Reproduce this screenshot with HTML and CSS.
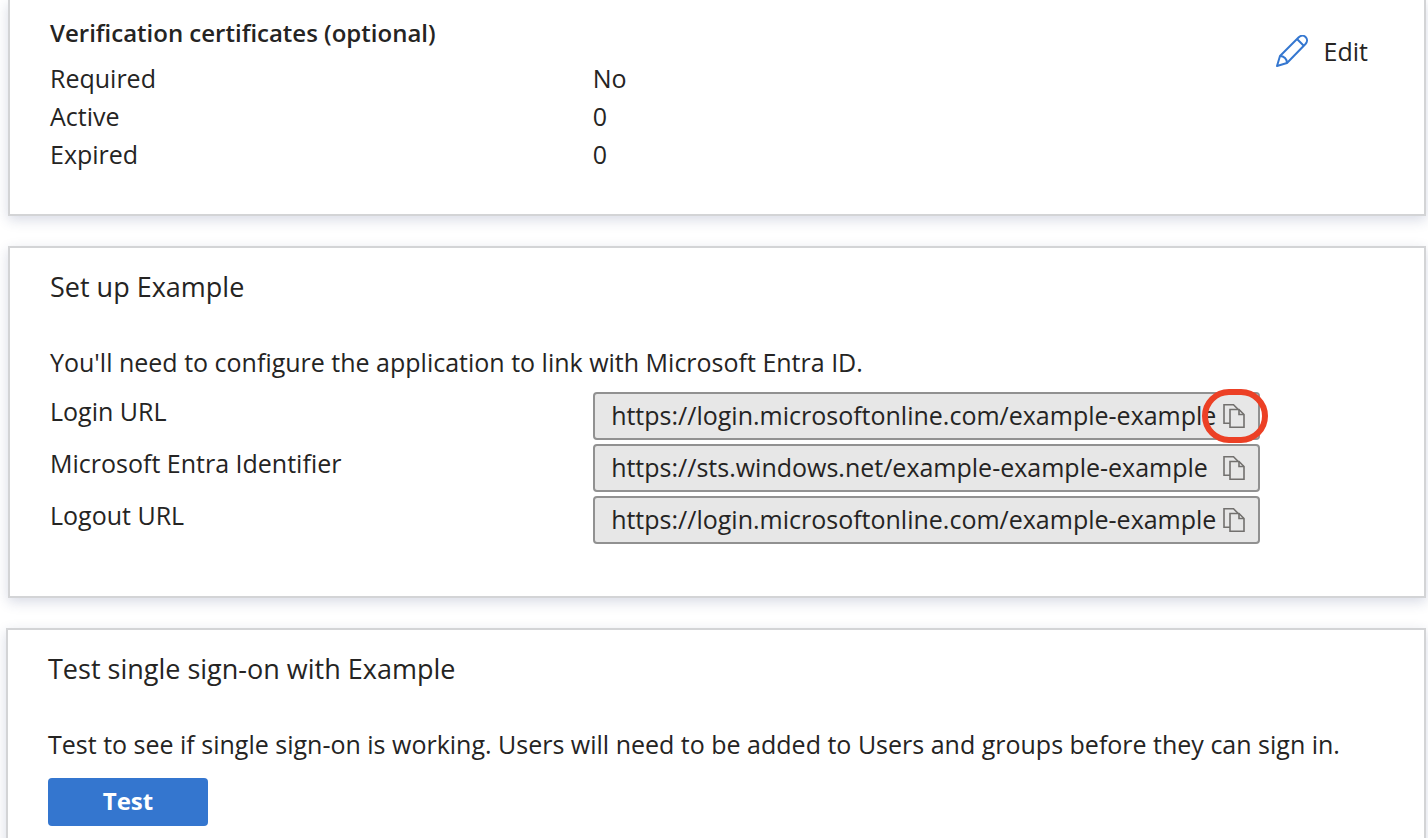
FILE: index.html
```html
<!DOCTYPE html>
<html lang="en">
<head>
  <meta charset="UTF-8" />
  <meta name="viewport" content="width=device-width, initial-scale=1.0" />
  <title>Single sign-on</title>
  <link rel="stylesheet" href="styles.css">
</head>
<body>
  <svg class="sprite" aria-hidden="true">
    <symbol id="copy" viewBox="0 0 22 24">
      <path d="M7 19.3H1V.8h9.500l4.500 4.500" />
      <path d="M7 5.500h9l5 5v12.700H7z" />
      <path d="M16 5.500v5h5" />
    </symbol>
  </svg>

  <section class="card card-certs">
    <div class="certs-main">
      <h2 class="certs-title">Verification certificates (optional)</h2>
      <dl class="certs-list">
        <dt>Required</dt>
        <dd>No</dd>
        <dt>Active</dt>
        <dd>0</dd>
        <dt>Expired</dt>
        <dd>0</dd>
      </dl>
    </div>
    <button class="edit" type="button">
      <svg class="edit-icon" viewBox="0 0 32 32" aria-hidden="true">
        <path d="M1 31l3-10L22.500 2.500c5-5 11.500 1.500 7 6.500L11 28z" />
        <path d="M21 4l7 7M4 21c4 0 7 3 7 7" />
      </svg>
      Edit
    </button>
  </section>

  <section class="card">
    <h2 class="card-title">Set up Example</h2>
    <p class="card-text">You'll need to configure the application to link with Microsoft Entra ID.</p>
    <div class="urls">
      <label for="login">Login URL</label>
      <div class="field">
        <input id="login" type="text" value="https://login.microsoftonline.com/example-example" readonly>
        <button class="copy marked" type="button" aria-label="Copy login URL"><svg><use href="#copy" /></svg></button>
      </div>
      <label for="identifier">Microsoft Entra Identifier</label>
      <div class="field">
        <input id="identifier" type="text" value="https://sts.windows.net/example-example-example" readonly>
        <button class="copy" type="button" aria-label="Copy identifier"><svg><use href="#copy" /></svg></button>
      </div>
      <label for="logout">Logout URL</label>
      <div class="field">
        <input id="logout" type="text" value="https://login.microsoftonline.com/example-example" readonly>
        <button class="copy" type="button" aria-label="Copy logout URL"><svg><use href="#copy" /></svg></button>
      </div>
    </div>
  </section>

  <section class="card card-test">
    <h2 class="card-title">Test single sign-on with Example</h2>
    <p class="card-text">Test to see if single sign-on is working. Users will need to be added to Users and groups before they can sign in.</p>
    <button class="primary" type="button">Test</button>
  </section>
</body>
</html>
```

FILE: styles.css
```css
* {
  box-sizing: border-box;
}
body {
  margin: 0;
  padding: 0 2px 0 8px;
  background: #fff;
  color: #252423;
  font-family: "Open Sans", "Noto Sans", sans-serif;
  font-size: 25px;
  line-height: 38px;
  overflow-x: hidden;
}
h2, p, dl, dd {
  margin: 0;
}
button, input {
  font: inherit;
  color: inherit;
}
button {
  padding: 0;
  border: 0;
  background: none;
  cursor: pointer;
}
.sprite {
  display: none;
}
.card {
  margin-bottom: 30px;
  padding: 20px 40px 52px;
  border: 2px solid #d3d4d6;
  background: #fff;
  box-shadow: 0 4px 12px rgba(40, 55, 110, 0.18);
}
.card-title {
  margin-bottom: 37px;
  font-size: 27px;
  font-weight: 400;
}

/* certificates */
.card-certs {
  display: flex;
  align-items: flex-start;
  padding: 14px 56px 41px 40px;
  border-top: 0;
}
.certs-main {
  flex: 1;
}
.certs-title {
  margin-bottom: 7px;
  font-size: 24px;
  font-weight: 600;
}
.certs-list {
  display: grid;
  grid-template-columns: 31fr 39fr;
}
.edit {
  display: flex;
  align-items: center;
  gap: 16px;
  margin-top: 18px;
}
.edit-icon {
  width: 32px;
  height: 32px;
  fill: none;
  stroke: #3577d0;
  stroke-width: 2;
  stroke-linejoin: round;
}

/* url fields */
.urls {
  display: grid;
  grid-template-columns: 57fr 70fr 13fr;
  row-gap: 4px;
  margin-top: 11px;
}
.urls label {
  grid-column: 1;
}
.field {
  display: flex;
  align-items: center;
  height: 48px;
  padding: 0 13px 0 16px;
  border: 2px solid #919191;
  border-radius: 4px;
  background: #e7e7e7;
}
.field input {
  flex: 1;
  min-width: 0;
  height: 44px;
  padding: 0 0 2px;
  border: 0;
  background: none;
}
.copy {
  position: relative;
  display: flex;
  margin-left: 4px;
}
.copy svg {
  width: 22px;
  height: 24px;
  fill: none;
  stroke: #72706e;
  stroke-width: 1.6;
}
.marked::after {
  content: "";
  position: absolute;
  inset: -15px -23px -15px -21px;
  border: 6px solid #ec4025;
  border-radius: 28px;
}

/* test */
.card-test {
  margin-left: -2px;
  margin-bottom: 0;
}
.card-test .card-text {
  margin-bottom: 15px;
}
.primary {
  display: block;
  width: 160px;
  height: 48px;
  padding-bottom: 2px;
  border-radius: 4px;
  background: #3476cf;
  color: #fff;
  font-size: 24px;
  font-weight: 700;
}
```
